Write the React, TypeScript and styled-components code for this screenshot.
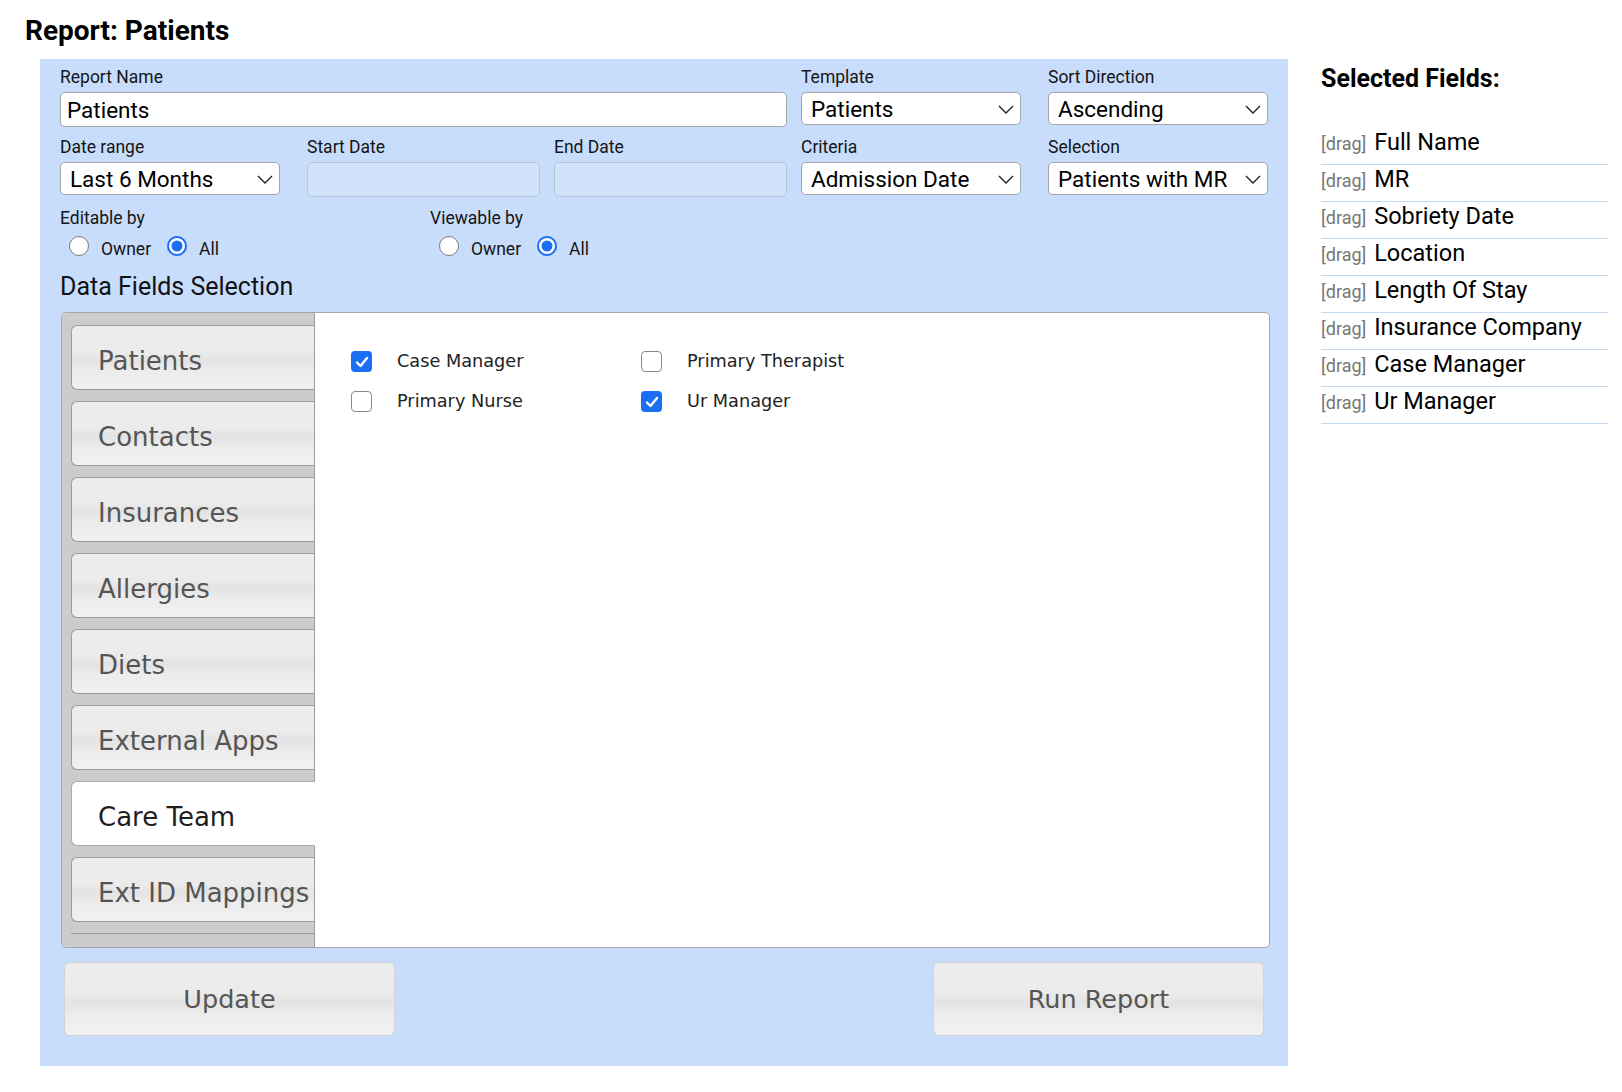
import styled, { createGlobalStyle, css } from 'styled-components'

const GlobalStyle = createGlobalStyle`
  html, body {
    margin: 0;
    background: #fff;
  }
  body {
    font-family: Roboto, 'Liberation Sans', sans-serif;
    color: #111;
  }
  * {
    box-sizing: border-box;
  }
`

const tabs = [
  'Patients',
  'Contacts',
  'Insurances',
  'Allergies',
  'Diets',
  'External Apps',
  'Care Team',
  'Ext ID Mappings',
]
const activeTab = 'Care Team'

const careTeamFields = [
  { label: 'Case Manager', checked: true },
  { label: 'Primary Therapist', checked: false },
  { label: 'Primary Nurse', checked: false },
  { label: 'Ur Manager', checked: true },
]

const selectedFields = [
  'Full Name',
  'MR',
  'Sobriety Date',
  'Location',
  'Length Of Stay',
  'Insurance Company',
  'Case Manager',
  'Ur Manager',
]

function Chevron() {
  return (
    <ChevronIcon width="16" height="9" viewBox="0 0 16 9">
      <polyline points="1,1 8,8 15,1" fill="none" stroke="#222" strokeWidth="1.4" />
    </ChevronIcon>
  )
}

function Select({ value, options }: { value: string; options?: string[] }) {
  return (
    <SelectWrap>
      <SelectControl defaultValue={value}>
        {(options ?? [value]).map((o) => (
          <option key={o}>{o}</option>
        ))}
      </SelectControl>
      <Chevron />
    </SelectWrap>
  )
}

function RadioGroup({ label, name }: { label: string; name: string }) {
  return (
    <AccessGroup>
      <Label>{label}</Label>
      <RadioRow>
        <Radio type="radio" name={name} />
        <RadioText>Owner</RadioText>
        <Radio type="radio" name={name} defaultChecked />
        <RadioText>All</RadioText>
      </RadioRow>
    </AccessGroup>
  )
}

function Check({ checked }: { checked: boolean }) {
  return (
    <CheckBox $checked={checked}>
      {checked && (
        <svg width="14" height="12" viewBox="0 0 14 12">
          <polyline
            points="2,6.5 5.5,10 12,2"
            fill="none"
            stroke="#fff"
            strokeWidth="2.4"
            strokeLinecap="round"
            strokeLinejoin="round"
          />
        </svg>
      )}
    </CheckBox>
  )
}

export default function App() {
  return (
    <Page>
      <GlobalStyle />
      <Title>Report: Patients</Title>
      <Layout>
        <Panel>
          <FormGrid>
            <Field $span={3}>
              <Label>Report Name</Label>
              <TextInput defaultValue="Patients" />
            </Field>
            <Field>
              <Label>Template</Label>
              <Select value="Patients" />
            </Field>
            <Field>
              <Label>Sort Direction</Label>
              <Select value="Ascending" options={['Ascending', 'Descending']} />
            </Field>
            <Field>
              <Label>Date range</Label>
              <Select value="Last 6 Months" />
            </Field>
            <Field>
              <Label>Start Date</Label>
              <TextInput disabled />
            </Field>
            <Field>
              <Label>End Date</Label>
              <TextInput disabled />
            </Field>
            <Field>
              <Label>Criteria</Label>
              <Select value="Admission Date" />
            </Field>
            <Field>
              <Label>Selection</Label>
              <Select value="Patients with MR" />
            </Field>
          </FormGrid>

          <AccessRow>
            <RadioGroup label="Editable by" name="editable" />
            <RadioGroup label="Viewable by" name="viewable" />
          </AccessRow>

          <SectionTitle>Data Fields Selection</SectionTitle>

          <FieldsBox>
            <TabColumn>
              {tabs.map((t) => (
                <Tab key={t} $active={t === activeTab}>
                  {t}
                </Tab>
              ))}
              <TabsEnd />
            </TabColumn>
            <TabContent>
              <CheckGrid>
                {careTeamFields.map((f) => (
                  <CheckItem key={f.label}>
                    <Check checked={f.checked} />
                    {f.label}
                  </CheckItem>
                ))}
              </CheckGrid>
            </TabContent>
          </FieldsBox>

          <Actions>
            <ActionButton>Update</ActionButton>
            <ActionButton>Run Report</ActionButton>
          </Actions>
        </Panel>

        <Sidebar>
          <SidebarTitle>Selected Fields:</SidebarTitle>
          <SelectedList>
            {selectedFields.map((f) => (
              <SelectedItem key={f}>
                <Drag>[drag]</Drag> {f}
              </SelectedItem>
            ))}
          </SelectedList>
        </Sidebar>
      </Layout>
    </Page>
  )
}

const softGradient = css`
  background: linear-gradient(
    to bottom,
    #ededed 0%,
    #ebebeb 42%,
    #e3e3e3 55%,
    #ebebeb 68%,
    #f1f1f1 100%
  );
`

const Page = styled.div`
  width: 1622px;
  padding: 14px 0 0 25px;
`

const Title = styled.h1`
  margin: 0 0 11px;
  font-family: Roboto, sans-serif;
  font-size: 28px;
  font-weight: 700;
  line-height: 34px;
  color: #000;
`

const Layout = styled.div`
  display: flex;
  align-items: flex-start;
`

const Panel = styled.section`
  width: 1248px;
  margin-left: 15px;
  padding: 8px 7px 30px 20px;
  background: #c8ddfb;
`

const FormGrid = styled.div`
  display: grid;
  grid-template-columns: repeat(5, 233px);
  column-gap: 14px;
  row-gap: 10px;
`

const Field = styled.div<{ $span?: number }>`
  grid-column: span ${(p) => p.$span ?? 1};
  display: flex;
  flex-direction: column;
  align-items: flex-start;
`

const Label = styled.label`
  display: block;
  margin-bottom: 5px;
  font-size: 17.5px;
  line-height: 20px;
  color: #151515;
`

const TextInput = styled.input`
  width: 100%;
  height: 35px;
  padding: 0 6px;
  border: 1px solid #a5a5a5;
  border-radius: 5px;
  background: #fff;
  font-family: Roboto, sans-serif;
  font-size: 22.5px;
  color: #000;
  outline: none;

  &:disabled {
    background: #d1e3fb;
    border-color: #b7c4d6;
  }
`

const SelectWrap = styled.div`
  position: relative;
  width: 220px;
`

const SelectControl = styled.select`
  appearance: none;
  width: 100%;
  height: 33px;
  padding: 0 28px 0 9px;
  border: 1px solid #a5a5a5;
  border-radius: 5px;
  background: #fff;
  font-family: Roboto, sans-serif;
  font-size: 22.5px;
  color: #000;
  outline: none;
`

const ChevronIcon = styled.svg`
  position: absolute;
  right: 7px;
  top: 13px;
  pointer-events: none;
`

const AccessRow = styled.div`
  display: flex;
  margin-top: 11px;
`

const AccessGroup = styled.div`
  width: 370px;
`

const RadioRow = styled.div`
  display: flex;
  align-items: center;
  height: 26px;
  margin-top: 1px;
  padding-left: 9px;
`

const Radio = styled.input`
  appearance: none;
  width: 20px;
  height: 20px;
  margin: 0 12px 0 0;
  border: 1px solid #7b7b7b;
  border-radius: 50%;
  background: #fff;

  &:checked {
    border: none;
    background: #1a6ef4;
    box-shadow:
      inset 0 0 0 2px #1a6ef4,
      inset 0 0 0 4.5px #fff;
  }
`

const RadioText = styled.span`
  margin-right: 16px;
  padding-top: 6px;
  font-size: 17.5px;
  line-height: 20px;
  color: #151515;
`

const SectionTitle = styled.h2`
  margin: 14px 0 11px;
  font-size: 25px;
  font-weight: 400;
  line-height: 28px;
  color: #111;
`

const FieldsBox = styled.div`
  display: flex;
  height: 636px;
  margin: 0 11px 0 1px;
  border: 1px solid #a6a6a6;
  border-radius: 5px;
  background: #fff;
  overflow: hidden;
`

const TabColumn = styled.div`
  display: flex;
  flex-direction: column;
  gap: 11px;
  width: 253px;
  flex-shrink: 0;
  padding: 12px 0 0 9px;
  background: #cccccc;
  border-right: 1px solid #9a9a9a;
`

const Tab = styled.div<{ $active?: boolean }>`
  height: 65px;
  flex-shrink: 0;
  padding: 8px 0 0 26px;
  border: 1px solid #9c9c9c;
  border-right: none;
  border-radius: 6px 0 0 6px;
  font-family: 'DejaVu Sans', Verdana, sans-serif;
  font-size: 26px;
  line-height: 55px;
  white-space: nowrap;
  color: #555;
  ${softGradient}

  ${(p) =>
    p.$active &&
    css`
      margin-right: -1px;
      background: #fff;
      border-color: #aaa;
      color: #1e1e1e;
    `}
`

const TabsEnd = styled.div`
  border-top: 1px solid #9c9c9c;
`

const TabContent = styled.div`
  flex: 1;
  padding: 38px 0 0 36px;
`

const CheckGrid = styled.div`
  display: grid;
  grid-template-columns: 290px 290px;
  row-gap: 19px;
`

const CheckItem = styled.label`
  display: flex;
  align-items: center;
  height: 21px;
  font-family: 'DejaVu Sans', Verdana, sans-serif;
  font-size: 17.7px;
  line-height: 21px;
  color: #222;
`

const CheckBox = styled.span<{ $checked: boolean }>`
  display: flex;
  align-items: center;
  justify-content: center;
  width: 21px;
  height: 21px;
  margin-right: 25px;
  border-radius: 4px;
  border: 1.5px solid #8a8a8a;
  background: #fff;

  ${(p) =>
    p.$checked &&
    css`
      border: none;
      background: #1a6ef4;
    `}
`

const Actions = styled.div`
  display: flex;
  justify-content: space-between;
  margin-top: 14px;
  padding: 0 17px 0 4px;
`

const ActionButton = styled.button`
  width: 331px;
  height: 74px;
  border: 1px solid #d3d3d3;
  border-radius: 6px;
  ${softGradient}
  font-family: 'DejaVu Sans', Verdana, sans-serif;
  font-size: 25.5px;
  color: #555;
  cursor: pointer;
`

const Sidebar = styled.aside`
  width: 287px;
  margin-left: 33px;
  padding-top: 5px;
`

const SidebarTitle = styled.h3`
  margin: 0;
  font-size: 25px;
  font-weight: 700;
  line-height: 30px;
  color: #000;
`

const SelectedList = styled.ul`
  margin: 34px 0 0;
  padding: 0;
  list-style: none;
`

const SelectedItem = styled.li`
  height: 37px;
  border-bottom: 1px solid #c5d9f4;
  font-size: 23.5px;
  line-height: 28px;
  color: #000;
  white-space: nowrap;
`

const Drag = styled.span`
  margin-right: 2px;
  font-size: 18px;
  line-height: 20px;
  color: #777;
`
